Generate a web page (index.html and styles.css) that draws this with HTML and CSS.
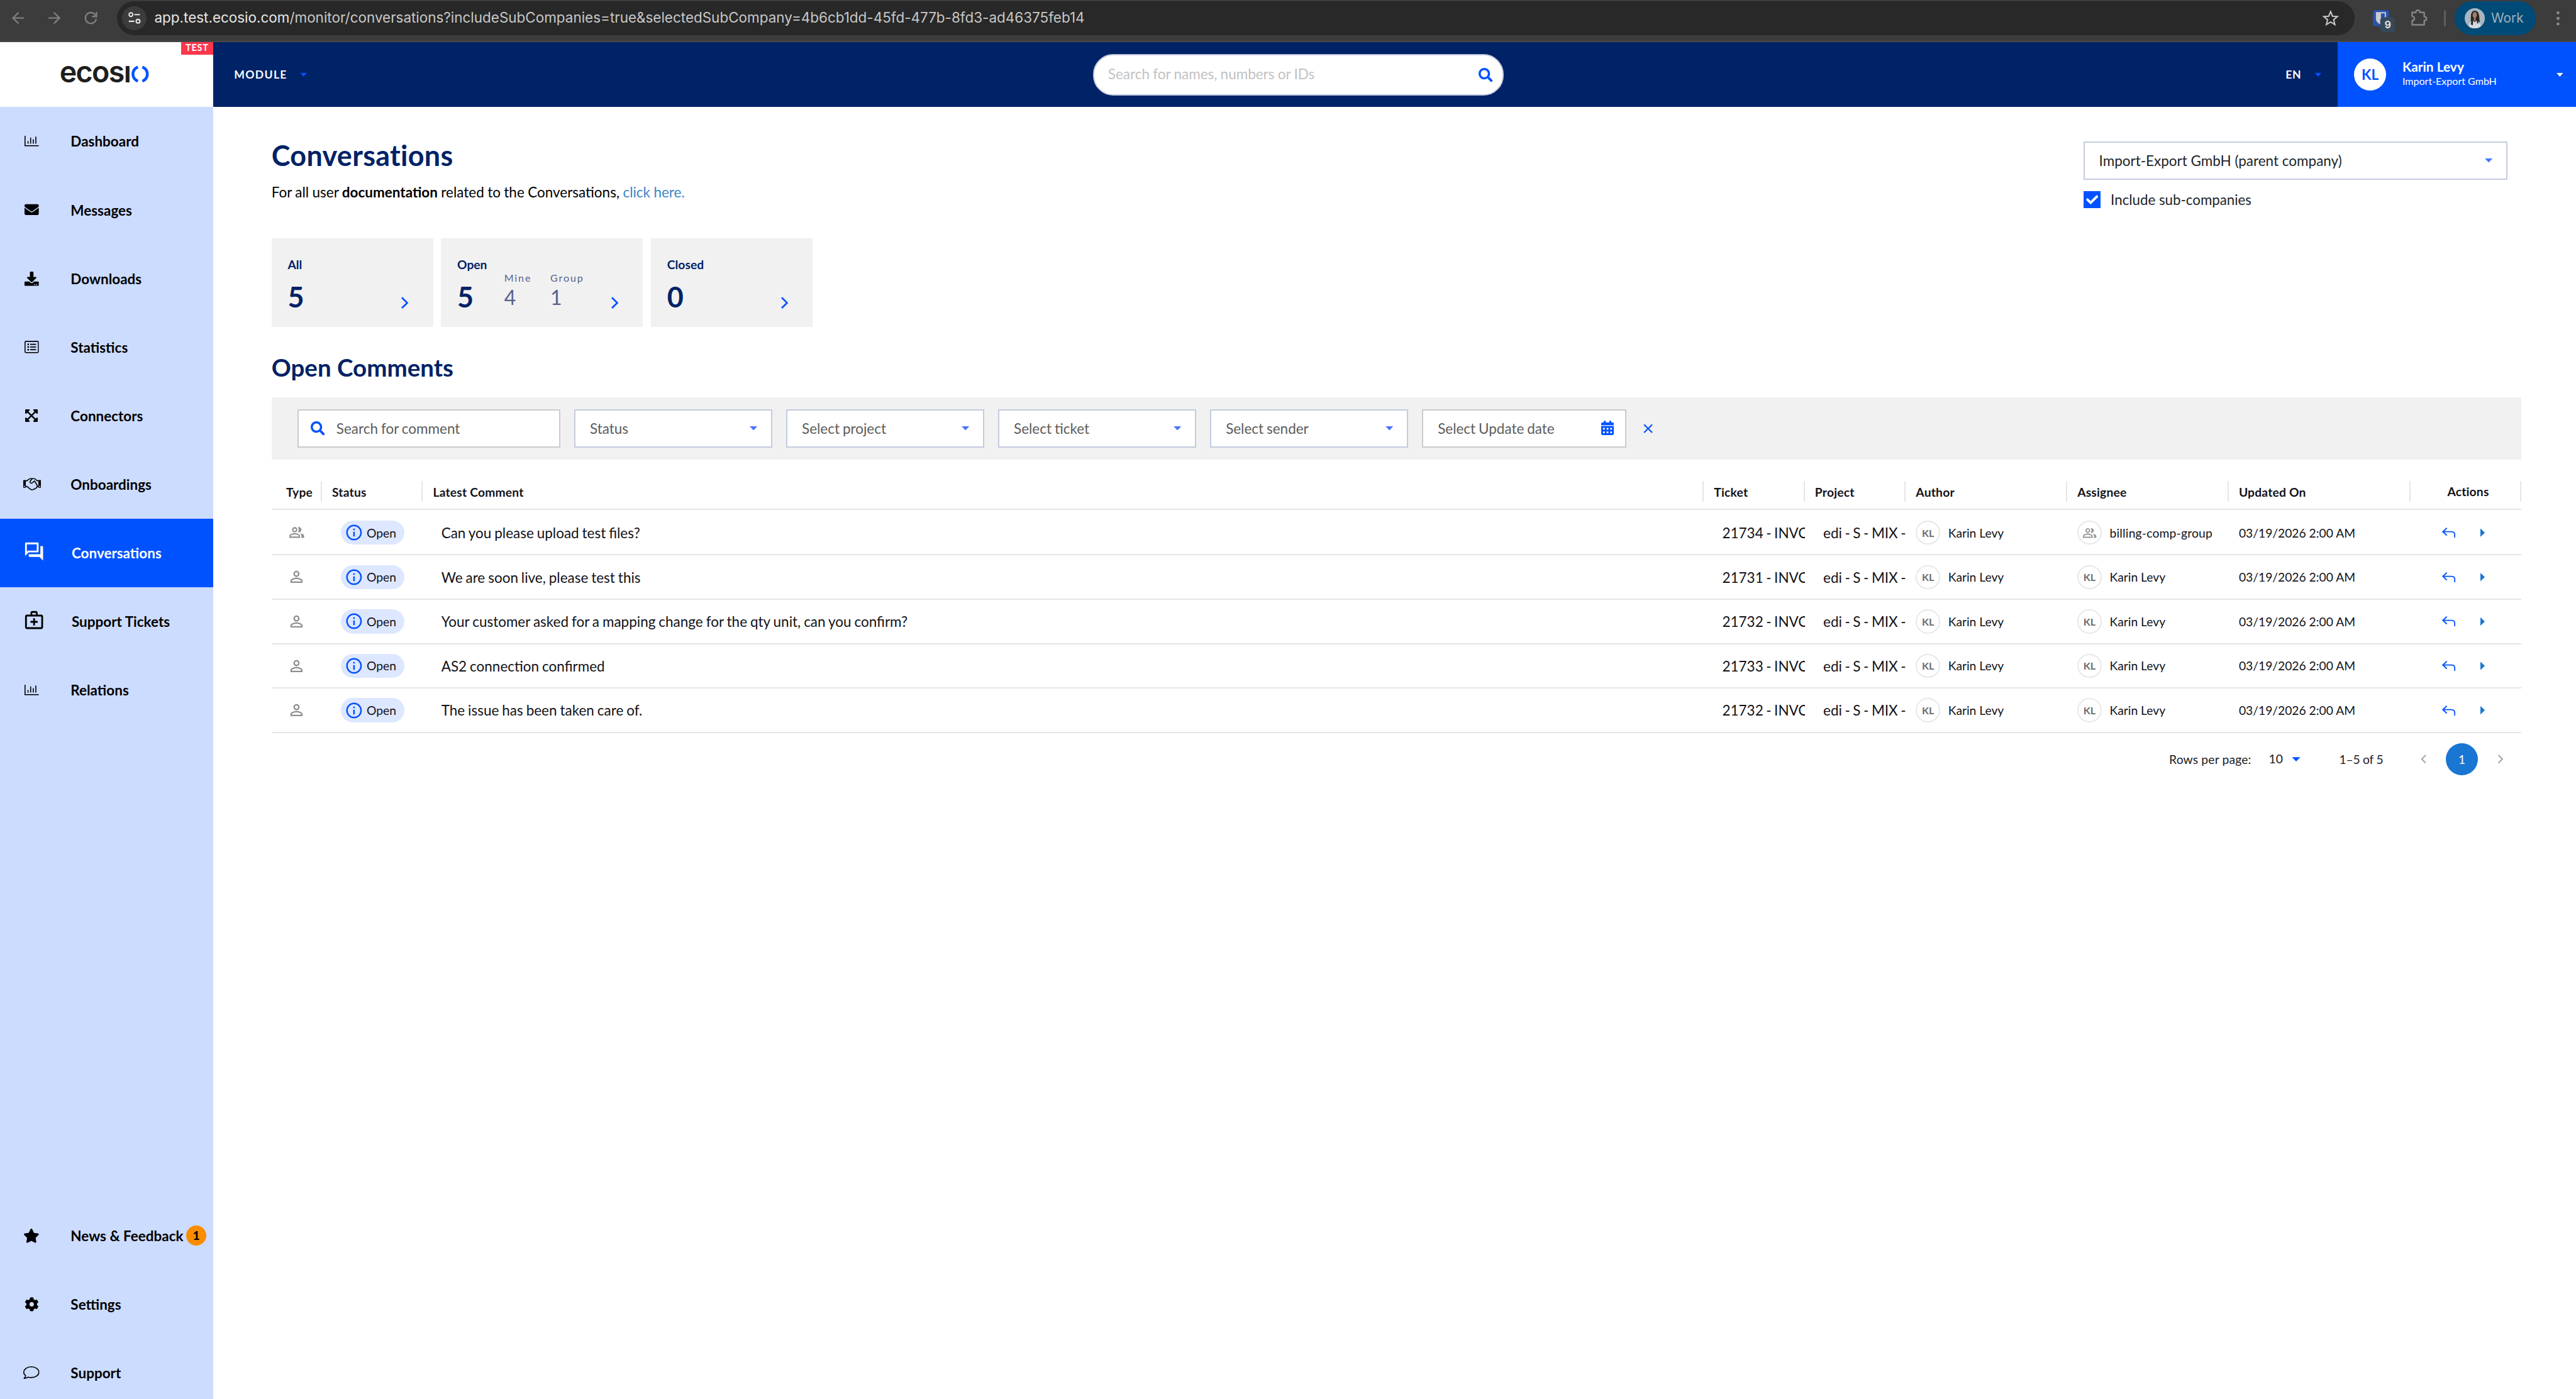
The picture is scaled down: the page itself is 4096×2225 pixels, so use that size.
FILE: index.html
```html
<!DOCTYPE html>
<html lang="en">
<head>
<meta charset="utf-8">
<title>Conversations</title>
<link rel="stylesheet" href="styles.css">
</head>
<body>
<svg class="sprite" aria-hidden="true">
  <symbol id="i-chart" viewBox="0 0 28.5 21"><path d="M0 0h2v18.8h26.5V21H0zM6 10.500h2V15.500H6zM11.200 3.500h2v12h-2zM16.400 7h2v8.500h-2zM21.500 1.500h2v14h-2z"/></symbol>
  <symbol id="i-envelope" viewBox="0 0 512 512"><path d="M502.300 190.800c3.900-3.100 9.700-.2 9.700 4.700V400c0 26.500-21.500 48-48 48H48c-26.500 0-48-21.500-48-48V195.600c0-5 5.700-7.800 9.700-4.700 22.400 17.400 52.100 39.500 154.100 113.600 21.100 15.400 56.700 47.800 92.200 47.600 35.700.3 72-32.800 92.300-47.600 102-74.100 131.600-96.300 154-113.700zM256 320c23.200.4 56.600-29.200 73.400-41.400 132.700-96.300 142.800-104.700 173.400-128.700 5.800-4.500 9.200-11.500 9.200-18.900v-19c0-26.500-21.500-48-48-48H48c-26.500 0-48 21.500-48 48v19c0 7.400 3.400 14.300 9.200 18.900 30.600 23.900 40.700 32.400 173.400 128.700 16.800 12.200 50.200 41.800 73.400 41.400z"/></symbol>
  <symbol id="i-download" viewBox="0 0 512 512"><path d="M216 0h80c13.300 0 24 10.700 24 24v168h87.700c17.800 0 26.700 21.500 14.100 34.100L269.700 378.300c-7.500 7.500-19.800 7.500-27.300 0L90.100 226.100c-12.600-12.600-3.700-34.100 14.100-34.100H192V24c0-13.300 10.700-24 24-24zm296 376v112c0 13.300-10.700 24-24 24H24c-13.300 0-24-10.700-24-24V376c0-13.300 10.700-24 24-24h146.700l49 49c20.100 20.100 52.500 20.100 72.600 0l49-49H488c13.300 0 24 10.700 24 24zm-124 88c0-11-9-20-20-20s-20 9-20 20 9 20 20 20 20-9 20-20zm64 0c0-11-9-20-20-20s-20 9-20 20 9 20 20 20 20-9 20-20z"/></symbol>
  <symbol id="i-list" viewBox="0 0 28.500 24.500"><rect x="1" y="1" width="26.500" height="22.500" rx="2" fill="none" stroke="currentColor" stroke-width="2"/><path d="M11 6h12v2H11zM11 11.300h12v2H11zM11 16.600h12v2H11z"/><circle cx="7.300" cy="7" r="1.700"/><circle cx="7.300" cy="12.300" r="1.700"/><circle cx="7.300" cy="17.600" r="1.700"/></symbol>
  <symbol id="i-expand" viewBox="0 32 448 448"><path d="M448 344v112a23.940 23.940 0 0 1-24 24H312c-21.390 0-32.090-25.900-17-41l36.200-36.200L224 295.600 116.770 402.900 153 439c15.090 15.100 4.390 41-17 41H24a23.940 23.940 0 0 1-24-24V344c0-21.400 25.890-32.100 41-17l36.190 36.200L184.460 256 77.180 148.700 41 185c-15.100 15.100-41 4.400-41-17V56a23.940 23.940 0 0 1 24-24h112c21.390 0 32.090 25.900 17 41l-36.200 36.200L224 216.400l107.230-107.300L295 73c-15.090-15.100-4.390-41 17-41h112a23.940 23.940 0 0 1 24 24v112c0 21.400-25.890 32.100-41 17l-36.190-36.200L263.540 256l107.280 107.300L407 327.100c15.100-15.200 41-4.500 41 16.900z"/></symbol>
  <symbol id="i-handshake" viewBox="0 0 35 26"><path fill-rule="evenodd" d="M0 4.500h5v15.200H0zM30 4.500h5v15.200h-5zM2.500 15.600a1.200 1.200 0 1 0 0 2.400 1.200 1.200 0 0 0 0-2.400zM32.500 15.600a1.200 1.200 0 1 0 0 2.400 1.200 1.200 0 0 0 0-2.400z"/><path fill="none" stroke="currentColor" stroke-width="2" stroke-linejoin="round" d="M5 5.800h2.500C10 3.500 11.500 1.500 14 1.500h7.500c2.600 0 4 2.200 6 4.300H30M5 17h2.500c3 2.500 5 5 8 6.200 2.500.8 4.500.4 6-.8 3.500-1.600 5.500-3.200 6.200-5.400H30M19 1.500c-2.500.5-4.500 4-5.500 6-.6 2 1.200 3.600 3.200 3 2.300-.6 3.300-3.300 5.600-4.300l5.400 8.800v2"/></symbol>
  <symbol id="i-forum" viewBox="0 0 24 24"><path d="M15 4v7H5.170L4 12.170V4h11m1-2H3c-.55 0-1 .45-1 1v14l4-4h10c.55 0 1-.45 1-1V3c0-.55-.45-1-1-1zm5 4h-2v9H6v2c0 .55.45 1 1 1h11l4 4V7c0-.55-.45-1-1-1z"/></symbol>
  <symbol id="i-medical" viewBox="0 0 24 24"><path d="M20 6h-4V4c0-1.100-.9-2-2-2h-4c-1.100 0-2 .9-2 2v2H4c-1.100 0-2 .9-2 2v12c0 1.100.9 2 2 2h16c1.100 0 2-.9 2-2V8c0-1.100-.9-2-2-2zM10 4h4v2h-4V4zm10 16H4V8h16v12z"/><path d="M13 10h-2v3H8v2h3v3h2v-3h3v-2h-3z"/></symbol>
  <symbol id="i-star" viewBox="0 0 576 512"><path d="M259.300 17.800L194 150.200 47.900 171.500c-26.200 3.800-36.700 36.100-17.700 54.600l105.700 103-25 145.500c-4.500 26.300 23.200 46 46.400 33.700L288 439.600l130.700 68.700c23.200 12.200 50.900-7.400 46.400-33.700l-25-145.500 105.700-103c19-18.500 8.500-50.800-17.700-54.600L382 150.200 316.700 17.800c-11.700-23.600-45.600-23.900-57.400 0z"/></symbol>
  <symbol id="i-cog" viewBox="0 0 512 512"><path d="M487.400 315.700l-42.600-24.600c4.300-23.200 4.300-47 0-70.200l42.600-24.600c4.900-2.800 7.100-8.600 5.500-14-11.100-35.600-30-67.800-54.700-94.600-3.800-4.100-10-5.100-14.800-2.300L380.800 110c-17.900-15.400-38.500-27.300-60.800-35.100V25.800c0-5.600-3.900-10.500-9.400-11.700-36.700-8.200-74.300-7.800-109.200 0-5.500 1.200-9.400 6.100-9.400 11.700V75c-22.200 7.900-42.800 19.800-60.800 35.100L88.700 85.500c-4.900-2.800-11-1.900-14.800 2.300-24.700 26.700-43.600 58.900-54.700 94.600-1.700 5.400.6 11.200 5.500 14L67.300 221c-4.300 23.200-4.300 47 0 70.200l-42.600 24.600c-4.900 2.800-7.100 8.600-5.500 14 11.100 35.600 30 67.800 54.700 94.600 3.800 4.100 10 5.100 14.800 2.300l42.600-24.600c17.900 15.400 38.500 27.300 60.800 35.100v49.200c0 5.600 3.900 10.500 9.400 11.700 36.700 8.200 74.300 7.800 109.200 0 5.500-1.200 9.400-6.100 9.400-11.700v-49.200c22.200-7.900 42.800-19.800 60.800-35.100l42.600 24.600c4.900 2.800 11 1.900 14.800-2.300 24.700-26.700 43.600-58.900 54.700-94.600 1.500-5.500-.7-11.300-5.600-14.100zM256 336c-44.100 0-80-35.900-80-80s35.900-80 80-80 80 35.900 80 80-35.900 80-80 80z"/></symbol>
  <symbol id="i-comment" viewBox="0 0 32 25"><path fill="none" stroke="currentColor" stroke-width="2" stroke-linejoin="round" d="M16 1C7.500 1 1 5.800 1 12c0 2.600 1.400 4.800 3.800 6.500-.2 2-1.200 3.700-3.300 5.300 2.800.2 5.800-.5 8.500-2.400 1.900.6 3.900.9 6 .9 8.500 0 15-4.600 15-10.500S24.500 1 16 1z"/></symbol>
  <symbol id="i-search" viewBox="0 0 512 512"><path d="M505 442.700L405.300 343c-4.500-4.500-10.600-7-17-7H372c27.600-35.300 44-79.700 44-128C416 93.100 322.900 0 208 0S0 93.100 0 208s93.100 208 208 208c48.300 0 92.700-16.400 128-44v16.300c0 6.400 2.500 12.500 7 17l99.700 99.700c9.400 9.400 24.600 9.400 33.900 0l28.300-28.300c9.400-9.400 9.400-24.600.1-34zM208 336c-70.700 0-128-57.200-128-128 0-70.700 57.200-128 128-128 70.700 0 128 57.200 128 128 0 70.700-57.200 128-128 128z"/></symbol>
  <symbol id="i-calendar" viewBox="0 0 448 512"><path fill-rule="evenodd" d="M0 464c0 26.500 21.500 48 48 48h352c26.500 0 48-21.500 48-48V192H0zM64 256h64v64H64zM192 256h64v64h-64zM320 256h64v64h-64zM64 384h64v64H64zM192 384h64v64h-64zM320 384h64v64h-64zM400 64h-48V16c0-8.800-7.200-16-16-16h-32c-8.800 0-16 7.200-16 16v48H160V16c0-8.800-7.200-16-16-16h-32c-8.800 0-16 7.200-16 16v48H48C21.500 64 0 85.500 0 112v48h448v-48c0-26.500-21.500-48-48-48z"/></symbol>
  <symbol id="i-check" viewBox="0 0 512 512"><path d="M173.898 439.404l-166.400-166.400c-9.997-9.997-9.997-26.206 0-36.204l36.203-36.204c9.997-9.998 26.207-9.998 36.204 0L192 312.690 432.095 72.596c9.997-9.997 26.207-9.997 36.204 0l36.203 36.204c9.997 9.997 9.997 26.206 0 36.204l-294.400 294.401c-9.998 9.997-26.207 9.997-36.204-.001z"/></symbol>
  <symbol id="i-info" viewBox="0 0 24 24"><path d="M11 7h2v2h-2zm0 4h2v6h-2zm1-9C6.480 2 2 6.480 2 12s4.480 10 10 10 10-4.480 10-10S17.520 2 12 2zm0 18c-4.410 0-8-3.590-8-8s3.590-8 8-8 8 3.590 8 8-3.590 8-8 8z"/></symbol>
  <symbol id="i-person" viewBox="0 0 24 24"><path d="M12 5.900c1.160 0 2.100.94 2.100 2.100s-.94 2.100-2.100 2.100S9.900 9.160 9.900 8s.94-2.100 2.100-2.100m0 9c2.970 0 6.100 1.460 6.100 2.100v1.100H5.900V17c0-.64 3.130-2.100 6.100-2.100M12 4C9.790 4 8 5.790 8 8s1.790 4 4 4 4-1.790 4-4-1.790-4-4-4zm0 9c-2.670 0-8 1.340-8 4v3h16v-3c0-2.660-5.330-4-8-4z"/></symbol>
  <symbol id="i-people" viewBox="0 0 24 24"><path d="M16.670 13.130C18.040 14.060 19 15.320 19 17v3h4v-3c0-2.180-3.570-3.470-6.330-3.870zM15 12c2.210 0 4-1.790 4-4s-1.790-4-4-4c-.47 0-.91.1-1.330.24C14.500 5.270 15 6.580 15 8s-.5 2.730-1.330 3.760c.42.14.86.24 1.330.24zM9 12c2.210 0 4-1.790 4-4s-1.790-4-4-4-4 1.790-4 4 1.790 4 4 4zm0-6c1.100 0 2 .9 2 2s-.9 2-2 2-2-.9-2-2 .9-2 2-2zM9 13c-2.670 0-8 1.340-8 4v3h16v-3c0-2.660-5.330-4-8-4zm6 5H3v-.99C3.200 16.290 6.300 15 9 15s5.800 1.290 6 2z"/></symbol>
  <symbol id="i-reply" viewBox="0 0 26.400 20"><path fill="none" stroke="currentColor" stroke-width="2.400" d="M9.500 1L1.600 8.300l7.900 7.300M1.600 8.300h17.200c4 0 6.400 2.400 6.400 6.400V20"/></symbol>
  <symbol id="i-chevron" viewBox="0 0 16 24"><path fill="none" stroke="currentColor" stroke-width="3.400" d="M2.500 1.600L13 12 2.500 22.400"/></symbol>
  <symbol id="i-thin-chevron" viewBox="0 0 12 18"><path fill="none" stroke="currentColor" stroke-width="2.700" d="M2 1.200L9.800 9 2 16.800"/></symbol>
</svg>

<header class="browser">
  <svg class="b-ico" viewBox="0 0 24 24"><path d="M24 12H2M13 1L2 12l11 11"/></svg>
  <svg class="b-ico b-forward" viewBox="0 0 24 24"><path d="M0 12h22M11 1l11 11-11 11"/></svg>
  <svg class="b-ico b-reload" viewBox="0 0 24 24"><path d="M22.500 13.500A10.800 10.800 0 1 1 20 5l2.500 3.500M23 0v9h-9"/></svg>
  <div class="omnibox">
    <span class="site"><svg viewBox="0 0 24 24"><circle cx="5.200" cy="5.200" r="3.700"/><path d="M12 5.200h11M1 18.500h11"/><circle cx="19.300" cy="18.500" r="3.700"/></svg></span>
    <span class="url"><b>app.test.ecosio.com</b>/monitor/conversations?includeSubCompanies=true&amp;selectedSubCompany=4b6cb1dd-45fd-477b-8fd3-ad46375feb14</span>
    <svg class="bookmark" viewBox="0 0 32 31"><path d="M16 3l3.700 9.100 9.800.8-7.500 6.300 2.400 9.500L16 23.500l-8.400 5.200L10 19.200l-7.500-6.300 9.800-.8z"/></svg>
  </div>
  <span class="ext"><svg viewBox="0 0 44 44"><rect width="32" height="32" rx="5" fill="#2a52a8"/><path d="M6 4h20v13c0 6-5 9.500-10 12-5-2.500-10-6-10-12z" fill="#c8ccd2"/><path d="M16 6.500h7.500V17c0 4-3.500 7-7.500 9z" fill="#2a52a8"/><rect x="14.500" y="14" width="29" height="30" rx="7" fill="#36495a"/></svg><span class="ext-count">9</span></span>
  <svg class="puzzle" viewBox="0 0 33 32"><path d="M3 6h7.500c0-6 8-6 8 0H27v8.500c6 0 6 7.500 0 7.500v8.500H3V22.500c6-1 6-8 0-9z"/></svg>
  <span class="b-sep"></span>
  <span class="profile">
    <svg class="photo" viewBox="0 0 40 40"><clipPath id="pc"><circle cx="20" cy="20" r="20"/></clipPath><g clip-path="url(#pc)"><rect width="40" height="40" fill="#a9b6c2"/><path d="M12 30C13 20 10 5 20 5s9 14 10 26z" fill="#2a2524"/><ellipse cx="20" cy="13.500" rx="4.300" ry="6" fill="#a27d6c"/><path d="M18 18h4v7h-4z" fill="#93705f"/><path d="M8 40c0-11 4-14 9.500-15.500L20 28l2.500-3.500C28 26 32 29 32 40z" fill="#d3d9df"/><path d="M12 32c2-5 2-12 2-16l3 8-1 10zM27 30c-1-4-1-10-2-15l-2 8 2 8z" fill="#2a2524"/></g></svg>
    <span>Work</span>
  </span>
  <svg class="dots" viewBox="0 0 6 28"><circle cx="3" cy="3" r="3"/><circle cx="3" cy="14" r="3"/><circle cx="3" cy="25" r="3"/></svg>
</header>

<div class="app">
  <aside class="sidebar">
    <div class="brand">
      <span class="logo"><span class="wordmark">ecosı</span><svg viewBox="0 0 32 32"><path d="M11.500 1.800C-1.500 7.500-1.500 24.500 11.500 30.200M20.500 1.800c13 5.700 13 22.700 0 28.400"/></svg></span>
      <span class="env">TEST</span>
    </div>
    <nav class="menu">
      <a class="item"><svg class="ic-chart"><use href="#i-chart"/></svg><span>Dashboard</span></a>
      <a class="item"><svg class="ic-14"><use href="#i-envelope"/></svg><span>Messages</span></a>
      <a class="item"><svg class="ic-14"><use href="#i-download"/></svg><span>Downloads</span></a>
      <a class="item"><svg class="ic-list"><use href="#i-list"/></svg><span>Statistics</span></a>
      <a class="item"><svg class="ic-expand"><use href="#i-expand"/></svg><span>Connectors</span></a>
      <a class="item"><svg class="ic-hand"><use href="#i-handshake"/></svg><span>Onboardings</span></a>
      <a class="item material active"><svg class="ic-mat"><use href="#i-forum"/></svg><span>Conversations</span></a>
      <a class="item material"><svg class="ic-mat"><use href="#i-medical"/></svg><span>Support Tickets</span></a>
      <a class="item"><svg class="ic-chart"><use href="#i-chart"/></svg><span>Relations</span></a>
    </nav>
    <nav class="menu menu-bottom">
      <a class="item"><svg class="ic-star"><use href="#i-star"/></svg><span>News &amp; Feedback</span><b class="count">1</b></a>
      <a class="item"><svg class="ic-14"><use href="#i-cog"/></svg><span>Settings</span></a>
      <a class="item"><svg class="ic-comment"><use href="#i-comment"/></svg><span>Support</span></a>
    </nav>
  </aside>

  <div class="page">
    <div class="topbar">
      <span class="module"><span>MODULE</span><i class="caret"></i></span>
      <div class="global-search"><span>Search for names, numbers or IDs</span><svg><use href="#i-search"/></svg></div>
      <span class="lang"><span>EN</span><i class="caret"></i></span>
      <div class="user">
        <span class="user-avatar">KL</span>
        <span class="user-text"><b>Karin Levy</b><small>Import-Export GmbH</small></span>
        <i class="caret white"></i>
      </div>
    </div>

    <main class="content">
      <section class="head">
        <div>
          <h1>Conversations</h1>
          <p>For all user <b>documentation</b> related to the Conversations, <a>click here.</a></p>
        </div>
        <div class="company">
          <div class="field select"><span>Import-Export GmbH (parent company)</span><i class="caret soft"></i></div>
          <label><span class="box"><svg><use href="#i-check"/></svg></span><span class="label">Include sub-companies</span></label>
        </div>
      </section>

      <section class="cards">
        <div class="card"><div class="main"><b>All</b><strong>5</strong></div><svg><use href="#i-chevron"/></svg></div>
        <div class="card wide"><div class="main"><b>Open</b><strong>5</strong></div><div class="sub"><span>Mine</span><em>4</em></div><div class="sub"><span>Group</span><em>1</em></div><svg><use href="#i-chevron"/></svg></div>
        <div class="card"><div class="main"><b>Closed</b><strong>0</strong></div><svg><use href="#i-chevron"/></svg></div>
      </section>

      <h2>Open Comments</h2>

      <section class="filters">
        <div class="field grey search"><svg><use href="#i-search"/></svg><span>Search for comment</span></div>
        <div class="field"><span>Status</span><i class="caret soft"></i></div>
        <div class="field"><span>Select project</span><i class="caret soft"></i></div>
        <div class="field"><span>Select ticket</span><i class="caret soft"></i></div>
        <div class="field"><span>Select sender</span><i class="caret soft"></i></div>
        <div class="field grey date"><span>Select Update date</span><svg><use href="#i-calendar"/></svg></div>
        <svg class="clear" viewBox="0 0 19 19"><path d="M1.500 1.500l16 16M17.500 1.500l-16 16"/></svg>
      </section>

      <section class="table">
        <div class="row thead">
          <div class="c-type">Type</div><div>Status</div><div>Latest Comment</div><div>Ticket</div><div>Project</div><div>Author</div><div>Assignee</div><div>Updated On</div><div class="c-act">Actions</div>
        </div>
        <div class="row first">
          <div class="c-type"><svg class="people"><use href="#i-people"/></svg></div>
          <div class="c-status"><span class="pill"><svg><use href="#i-info"/></svg><span>Open</span></span></div>
          <div class="c-text">Can you please upload test files?</div>
          <div class="c-text c-ref">21734 - INVOIC</div><div class="c-text c-ref">edi - S - MIX -</div>
          <div class="c-user"><span class="avatar">KL</span><span>Karin Levy</span></div>
          <div class="c-user group"><span class="avatar"><svg><use href="#i-people"/></svg></span><span>billing-comp-group</span></div>
          <div class="c-date">03/19/2026 2:00 AM</div>
          <div class="c-act"><svg><use href="#i-reply"/></svg><i></i></div>
        </div>
        <div class="row">
          <div class="c-type"><svg><use href="#i-person"/></svg></div>
          <div class="c-status"><span class="pill"><svg><use href="#i-info"/></svg><span>Open</span></span></div>
          <div class="c-text">We are soon live, please test this</div>
          <div class="c-text c-ref">21731 - INVOIC</div><div class="c-text c-ref">edi - S - MIX -</div>
          <div class="c-user"><span class="avatar">KL</span><span>Karin Levy</span></div>
          <div class="c-user"><span class="avatar">KL</span><span>Karin Levy</span></div>
          <div class="c-date">03/19/2026 2:00 AM</div>
          <div class="c-act"><svg><use href="#i-reply"/></svg><i></i></div>
        </div>
        <div class="row">
          <div class="c-type"><svg><use href="#i-person"/></svg></div>
          <div class="c-status"><span class="pill"><svg><use href="#i-info"/></svg><span>Open</span></span></div>
          <div class="c-text">Your customer asked for a mapping change for the qty unit, can you confirm?</div>
          <div class="c-text c-ref">21732 - INVOIC</div><div class="c-text c-ref">edi - S - MIX -</div>
          <div class="c-user"><span class="avatar">KL</span><span>Karin Levy</span></div>
          <div class="c-user"><span class="avatar">KL</span><span>Karin Levy</span></div>
          <div class="c-date">03/19/2026 2:00 AM</div>
          <div class="c-act"><svg><use href="#i-reply"/></svg><i></i></div>
        </div>
        <div class="row">
          <div class="c-type"><svg><use href="#i-person"/></svg></div>
          <div class="c-status"><span class="pill"><svg><use href="#i-info"/></svg><span>Open</span></span></div>
          <div class="c-text">AS2 connection confirmed</div>
          <div class="c-text c-ref">21733 - INVOIC</div><div class="c-text c-ref">edi - S - MIX -</div>
          <div class="c-user"><span class="avatar">KL</span><span>Karin Levy</span></div>
          <div class="c-user"><span class="avatar">KL</span><span>Karin Levy</span></div>
          <div class="c-date">03/19/2026 2:00 AM</div>
          <div class="c-act"><svg><use href="#i-reply"/></svg><i></i></div>
        </div>
        <div class="row">
          <div class="c-type"><svg><use href="#i-person"/></svg></div>
          <div class="c-status"><span class="pill"><svg><use href="#i-info"/></svg><span>Open</span></span></div>
          <div class="c-text">The issue has been taken care of.</div>
          <div class="c-text c-ref">21732 - INVOIC</div><div class="c-text c-ref">edi - S - MIX -</div>
          <div class="c-user"><span class="avatar">KL</span><span>Karin Levy</span></div>
          <div class="c-user"><span class="avatar">KL</span><span>Karin Levy</span></div>
          <div class="c-date">03/19/2026 2:00 AM</div>
          <div class="c-act"><svg><use href="#i-reply"/></svg><i></i></div>
        </div>
      </section>

      <footer class="pager">
        <span class="per-page">Rows per page:</span>
        <span class="size"><span>10</span><i></i></span>
        <span class="range">1–5 of 5</span>
        <svg class="prev"><use href="#i-thin-chevron"/></svg>
        <span class="current">1</span>
        <svg><use href="#i-thin-chevron"/></svg>
      </footer>
    </main>
  </div>
</div>
</body>
</html>
```
FILE: styles.css
```css
/* 1rem is ten layout pixels: the page is 255.2rem wide */
html { font-size: 16.05px; }
* { box-sizing: border-box; }
body { margin: 0; width: 4096px; height: 2225px; overflow: hidden; display: flex; flex-direction: column; background: #fff; color: #111; font-family: Lato, sans-serif; font-size: 1.4rem; line-height: 1.2; }
svg { display: block; flex: none; fill: currentColor; overflow: visible; }
.sprite { position: absolute; width: 0; height: 0; }
h1, h2, p { margin: 0; }

.browser { flex: none; height: 4.2rem; display: flex; align-items: center; padding: 0 1.5rem 0.48rem 1.2rem; background: #3c3c3c; border-bottom: 2px solid #494949; }
.b-ico { width: 1.2rem; height: 1.2rem; fill: none; stroke: #7d7d7d; stroke-width: 3; }
.b-forward { margin-left: 2.4rem; }
.b-reload { margin-left: 2.4rem; }
.omnibox { margin-left: 2rem; width: 221.65rem; height: 3.4rem; border-radius: 1.7rem; background: #282828; display: flex; align-items: center; padding: 0 1.55rem 0 0.5rem; font-family: Inter, sans-serif; color: #c7c7c7; }
.site { width: 2.4rem; height: 2.4rem; border-radius: 50%; background: #3c3c3c; display: grid; place-items: center; }
.site svg { width: 1.2rem; height: 1.2rem; fill: none; stroke: #e3e3e3; stroke-width: 2.6; }
.url { margin-left: 0.8rem; white-space: nowrap; letter-spacing: -0.0008rem; }
.url b { font-weight: 400; color: #e6e6e6; }
.bookmark { width: 1.6rem; height: 1.55rem; margin-left: auto; fill: none; stroke: #c7c7c7; stroke-width: 2.6; }
.ext { position: relative; margin: 0.6rem 0 0 1.85rem; color: #ddd; }
.ext svg { width: 2.2rem; height: 2.2rem; }
.ext-count { position: absolute; left: 0.73rem; top: 0.75rem; width: 1.45rem; text-align: center; font: 700 1rem/1.4 Inter, sans-serif; }
.puzzle { width: 1.65rem; height: 1.6rem; margin-left: 1.5rem; margin-top: -0.1rem; fill: none; stroke: #858585; stroke-width: 3; stroke-linejoin: round; }
.b-sep { width: 0.2rem; height: 1.6rem; margin-left: 1.65rem; border-radius: 0.1rem; background: #5e5e5e; }
.profile { margin-left: 0.9rem; width: 8rem; height: 3.4rem; border-radius: 1.7rem; background: #004a77; display: flex; align-items: center; gap: 0.6rem; padding-left: 1rem; font-family: Inter, sans-serif; font-size: 1.3rem; color: #9fb0bd; }
.photo { width: 2rem; height: 2rem; }
.dots { width: 0.3rem; height: 1.4rem; margin-left: 2.05rem; fill: #8a8a8a; }

.app { flex: 1; min-height: 0; display: grid; grid-template-columns: 21.1rem 1fr; }
.sidebar { display: flex; flex-direction: column; background: #ccdcff; color: #000; overflow: hidden; }
.brand { position: relative; flex: none; height: 6.4rem; background: #fff; padding: 2.3rem 0 0 5.9rem; }
.logo { display: flex; height: 1.7rem; align-items: center; }
.wordmark { padding-bottom: 0.46rem; font: 600 2.9rem/1 Inter, sans-serif; letter-spacing: -0.035em; color: #1e1e1c; }
.logo svg { width: 1.6rem; height: 1.6rem; margin-left: 0.18rem; fill: none; stroke: #0052ff; stroke-width: 5.600; }
.env { position: absolute; right: 0; top: 0; width: 3.15rem; height: 1.2rem; background: #fb374b; color: #fff; font-size: 0.9rem; font-weight: 700; letter-spacing: 0.05rem; text-align: center; line-height: 1.15rem; }
.menu { display: flex; flex-direction: column; }
.menu-bottom { margin: auto 0 -0.8rem; }
.item { flex: none; height: 6.8rem; display: grid; grid-template-columns: 4.6rem auto auto; justify-content: start; align-items: center; padding-left: 2.4rem; font-weight: 700; white-space: nowrap; }
.item span { padding-top: 0.16rem; }
.material { grid-template-columns: 4.7rem auto; }
.active { background: #0052ff; color: #fff; }
.ic-chart { width: 1.42rem; height: 1.05rem; }
.ic-14 { width: 1.42rem; height: 1.42rem; }
.ic-list { width: 1.42rem; height: 1.23rem; }
.ic-expand { width: 1.25rem; height: 1.25rem; margin-left: 0.1rem; }
.ic-hand { width: 1.75rem; height: 1.3rem; margin-left: -0.1rem; }
.ic-mat { width: 2.14rem; height: 2.14rem; margin: -0.3rem 0 0 -0.11rem; }
.ic-star { width: 1.6rem; height: 1.42rem; margin-left: -0.07rem; }
.ic-comment { width: 1.6rem; height: 1.25rem; margin-left: -0.07rem; }
.count { width: 2rem; height: 2rem; margin-left: 0.28rem; border-radius: 50%; background: #fb8c00; font-size: 1.2rem; line-height: 2.05rem; text-align: center; }

.caret { display: block; flex: none; width: 0.7rem; height: 0.4rem; background: #0052ff; clip-path: polygon(0 0, 100% 0, 50% 100%); }
.caret.white { background: #fff; }
.caret.soft { background: #4675ff; width: 0.75rem; }

.page { display: flex; flex-direction: column; min-width: 0; }
.topbar { flex: none; height: 6.4rem; background: #002266; color: #fff; display: grid; grid-template-columns: 87.2rem 40.7rem 1fr 23.6rem; align-items: center; }
.module, .lang { display: flex; align-items: center; font-size: 1.1rem; font-weight: 700; letter-spacing: 0.08rem; }
.module { padding-left: 2.1rem; gap: 1.26rem; }
.lang { justify-content: flex-end; gap: 1.3rem; padding-right: 1.6rem; letter-spacing: 0.05rem; }
.global-search { height: 4.1rem; border: 2px solid #c4cbe0; border-radius: 2rem; background: #fff; display: flex; align-items: center; justify-content: space-between; padding: 0 1rem 0 1.35rem; color: #c2c2c2; word-spacing: -0.03rem; }
.global-search svg { width: 1.4rem; height: 1.4rem; color: #0052ff; }
.user { align-self: stretch; background: #0052ff; display: flex; align-items: center; padding: 0 1.25rem 0 1.6rem; }
.user-avatar { width: 3.2rem; height: 3.2rem; border-radius: 50%; background: #fff; color: #0052ff; font-weight: 700; text-align: center; line-height: 3.2rem; }
.user-text { margin-left: 1.6rem; padding-bottom: 0.35rem; display: flex; flex-direction: column; gap: 0.05rem; }
.user-text b { font-size: 1.3rem; line-height: 1.5rem; }
.user-text small { font-size: 1rem; line-height: 1.2rem; }
.user .caret { margin-left: auto; }

.content { padding: 0 5.4rem 0 5.8rem; }
.head { height: 13rem; display: flex; justify-content: space-between; align-items: flex-start; }
h1 { margin-top: 3.17rem; font-size: 2.8rem; letter-spacing: 0.019rem; color: #002266; }
.head p { margin-top: 1.12rem; color: #000; word-spacing: -0.02rem; }
.head a { color: #3d85c6; }
.company { width: 42rem; margin: 3.4rem 1.4rem 0 0; color: #212529; }
.company label { display: flex; align-items: center; gap: 1rem; margin-top: 1.15rem; height: 1.7rem; font-size: 1.39rem; }
.label { padding-top: 0.12rem; }
.box { width: 1.7rem; height: 1.7rem; background: #0052ff; color: #fff; display: grid; place-items: center; }
.box svg { width: 1.2rem; height: 1.2rem; }
.field { display: flex; align-items: center; justify-content: space-between; width: 19.6rem; height: 3.8rem; border: 2px solid #c4cbe0; background: #fff; padding: 0 1.35rem 0 1.42rem; white-space: nowrap; }
.field span { padding-top: 0.16rem; }
.field.select { width: 100%; }

.cards { display: flex; gap: 0.8rem; }
.card { width: 16rem; height: 8.8rem; background: #f1f1f1; display: flex; align-items: flex-start; padding: 1.87rem 2.4rem 0 1.6rem; color: #002266; }
.card.wide { width: 20rem; }
.card .main { display: flex; flex-direction: column; gap: 0.85rem; width: 4.65rem; }
.card b { font-size: 1.2rem; line-height: 1.44rem; }
.card strong { font-size: 2.8rem; line-height: 3.36rem; }
.sub { display: flex; flex-direction: column; gap: 0.18rem; margin-top: 1.44rem; width: 4.57rem; color: #56638f; }
.sub span { font-size: 1rem; letter-spacing: 0.12rem; line-height: 1.2rem; }
.sub em { font-style: normal; font-size: 2rem; line-height: 2.4rem; }
.card svg { width: 0.8rem; height: 1.2rem; margin: 3.93rem 0 0 auto; color: #0052ff; }

h2 { margin: 2.53rem 0 1.54rem; font-size: 2.4rem; color: #002266; }

.filters { height: 6.2rem; background: #f1f1f1; display: flex; align-items: center; gap: 1.4rem; padding-left: 2.6rem; color: #5c5c5c; word-spacing: -0.05rem; }
.filters .field span { padding-top: 0.2rem; }
.field.grey { border-color: #cbcbcb; }
.field.search { width: 26rem; justify-content: flex-start; gap: 1.15rem; padding-left: 1.15rem; }
.field svg { color: #0052ff; }
.search svg { width: 1.4rem; height: 1.4rem; }
.field.date { width: 20.2rem; padding-right: 1.1rem; }
.date svg { width: 1.25rem; height: 1.43rem; margin-top: -0.1rem; }
.clear { width: 0.95rem; height: 0.95rem; margin-left: 0.3rem; fill: none; stroke: #0052ff; stroke-width: 2.800; }

.table { margin-top: 1.4rem; }
.row { display: grid; grid-template-columns: 5rem 10rem 1fr 10rem 10rem 16rem 16rem 18rem 11rem; align-items: center; height: 4.4rem; border-bottom: 2px solid #e6e6e6; color: #121218; }
.row.first { height: 4.5rem; padding-top: 0.1rem; }
.row > div { overflow: hidden; white-space: nowrap; }
.row.thead { height: 3.6rem; font-size: 1.2rem; font-weight: 700; letter-spacing: 0.012rem; }
.thead > div { height: 2.1rem; line-height: 2.2rem; padding-left: 1rem; border-right: 2px solid #e6e6e6; }
.thead .c-type { padding-left: 1.45rem; }
.row:not(.thead) .c-type { display: grid; place-items: center; color: #8f8f8f; }
.c-type svg { width: 1.8rem; height: 1.8rem; }
.c-type .people { width: 1.6rem; height: 1.6rem; }
.c-status { padding-left: 1.87rem; }
.pill { display: inline-flex; vertical-align: top; align-items: center; gap: 0.35rem; width: 6.3rem; height: 2.4rem; border-radius: 1.2rem; background: #dde7ff; padding-left: 0.35rem; font-size: 1.2rem; }
.pill svg { width: 1.86rem; height: 1.86rem; color: #0052ff; }
.c-text { padding: 0.16rem 0 0 1.82rem; word-spacing: -0.05rem; }
.c-ref { word-spacing: -0.075rem; }
.c-user { display: flex; align-items: center; gap: 0.8rem; padding-left: 1rem; font-size: 1.2rem; }
.c-user.group { letter-spacing: 0.013rem; }
.avatar { flex: none; width: 2.4rem; height: 2.4rem; border: 2px solid #e8e8e8; border-radius: 50%; display: grid; place-items: center; font-size: 1rem; font-weight: 700; color: #6b6b6b; }
.avatar svg { width: 1.45rem; height: 1.45rem; color: #999; }
.c-date { padding-left: 1rem; font-size: 1.2rem; }
.row .c-act { display: flex; align-items: center; justify-content: flex-start; padding-left: 3.15rem; }
.row.thead .c-act { padding-left: 3.65rem; }
.c-act svg { width: 1.32rem; height: 1rem; color: #0052ff; }
.c-act i { width: 0.45rem; height: 0.85rem; margin-left: 2.45rem; background: #1976d2; clip-path: polygon(0 0, 100% 50%, 0 100%); }

.pager { height: 5.2rem; display: flex; align-items: center; justify-content: flex-end; padding-right: 1.8rem; font-size: 1.2rem; color: #1b1b1f; }
.per-page { letter-spacing: 0.01rem; }
.size { display: flex; align-items: center; gap: 0.9rem; margin-left: 1.75rem; }
.size span { padding-bottom: 0.12rem; }
.size i { width: 0.83rem; height: 0.42rem; background: #0052ff; clip-path: polygon(0 0, 100% 0, 50% 100%); }
.range { margin-left: 3.85rem; letter-spacing: -0.012rem; }
.pager svg { width: 0.6rem; height: 0.9rem; color: #a8a8a8; }
.pager .prev { margin-left: 3.7rem; transform: scaleX(-1); }
.current { width: 3.2rem; height: 3.2rem; margin: 0 1.9rem; border-radius: 50%; background: #1976d2; color: #fff; text-align: center; line-height: 3.2rem; }
```
